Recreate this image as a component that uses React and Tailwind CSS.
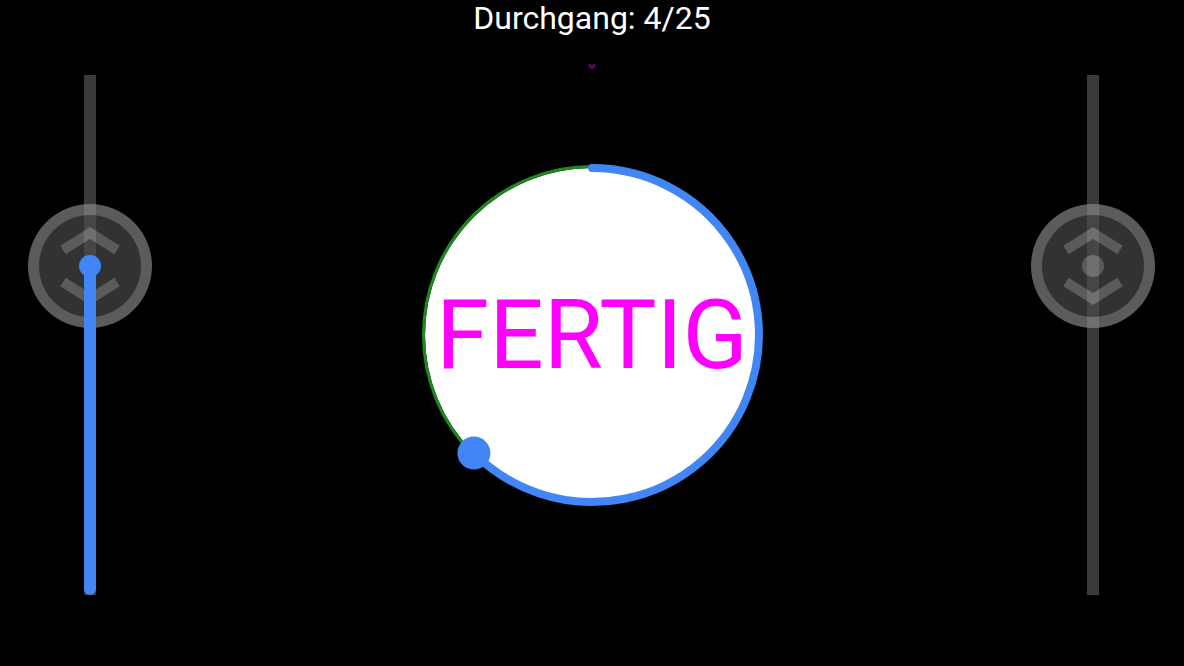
import React from "react";

const BLUE = "#4285f4";

// vertical slider with a round knob; filled = blue part from knob downwards
const Slider = ({ active }) => {
  const cx = 65;
  const cy = 206;
  return (
    <svg width="130" height="560" viewBox="0 0 130 560" className="shrink-0">
      <rect x={cx - 6} y="15" width="12" height="520" fill="#3a3a3a" />
      <g opacity="0.66">
        <circle cx={cx} cy={cy} r="62" fill="#8b8b8b" />
        <circle cx={cx} cy={cy} r="51" fill="#4d4d4d" />
        <polyline
          points={`${cx - 27},${cy - 16} ${cx},${cy - 33} ${cx + 27},${cy - 16}`}
          fill="none"
          stroke="#8b8b8b"
          strokeWidth="10"
        />
        <polyline
          points={`${cx - 27},${cy + 16} ${cx},${cy + 33} ${cx + 27},${cy + 16}`}
          fill="none"
          stroke="#8b8b8b"
          strokeWidth="10"
        />
        {!active && <circle cx={cx} cy={cy} r="11" fill="#8b8b8b" />}
      </g>
      {active && (
        <>
          <line x1={cx} y1={cy} x2={cx} y2="529" stroke={BLUE} strokeWidth="12" strokeLinecap="round" />
          <circle cx={cx} cy={cy} r="11" fill={BLUE} />
        </>
      )}
    </svg>
  );
};

const Dial = () => (
  <div className="relative w-[360px] h-[360px]">
    <svg width="360" height="360" viewBox="0 0 360 360" className="absolute inset-0">
      <circle cx="180" cy="180" r="167" fill="#ffffff" />
      <circle cx="180" cy="180" r="168.5" fill="none" stroke="#1e8a1e" strokeWidth="3" />
      <path
        d="M 180 13 A 167 167 0 1 1 61.9 298.1"
        fill="none"
        stroke={BLUE}
        strokeWidth="8"
        strokeLinecap="round"
      />
      <circle cx="61.9" cy="298.1" r="16.5" fill={BLUE} />
    </svg>
    <div className="absolute inset-0 flex items-center justify-center">
      <span className="text-[96px] leading-none text-[#ff00ff] font-['Roboto',sans-serif]">FERTIG</span>
    </div>
  </div>
);

export default function App() {
  return (
    <div className="w-[1184px] h-[666px] bg-black overflow-hidden font-['Roboto',sans-serif]">
      <div className="h-[36px] flex justify-center text-white text-[32px] leading-[36px]">
        Durchgang: 4/25
      </div>
      <div className="flex items-start">
        <div className="ml-[25px] mt-[24px]">
          <Slider active />
        </div>
        <div className="ml-[257px] mt-[27px] flex flex-col items-center">
          <svg width="8" height="7" viewBox="0 0 8 7">
            <path d="M0.5 1 Q2 0 4 2 Q6 0 7.5 1 Q8 5 4 6.5 Q0 5 0.5 1 Z" fill="#4a0a4e" />
          </svg>
          <div className="mt-[85px]">
            <Dial />
          </div>
        </div>
        <div className="ml-[256px] mt-[24px]">
          <Slider />
        </div>
      </div>
    </div>
  );
}
